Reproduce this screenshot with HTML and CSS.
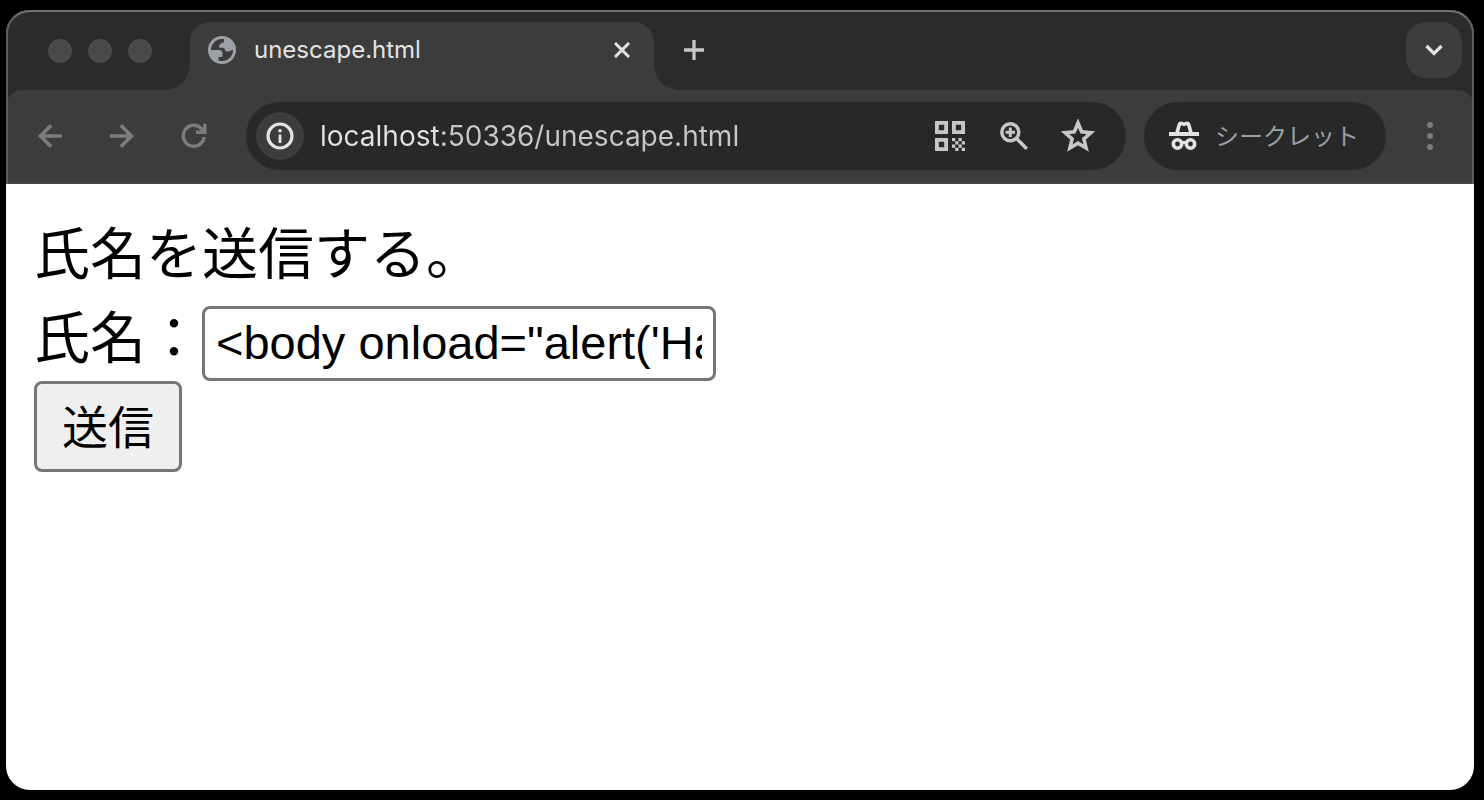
FILE: index.html
```html
<!DOCTYPE html>
<html lang="ja">
<head>
<meta charset="utf-8">
<title>unescape.html</title>
<link rel="stylesheet" href="styles.css">
</head>
<body>
<div class="window">
  <header class="chrome">
    <div class="tabstrip">
      <div class="lights"><span class="light"></span><span class="light"></span><span class="light"></span></div>
      <div class="tab">
        <svg class="favicon" viewBox="0 0 28 28" aria-hidden="true">
          <circle cx="14" cy="14" r="14" fill="#9aa0a6"/>
          <path fill="#3c3c3c" d="M3 14A11 11 0 0 1 14 3h2v2.500q0 1-1.500 1.200t-2 1.300q-1.300.5-1.300 1.700v2h4q1.500 0 1.500 1.500c0 1.500 1.500 2.300 3.500 2.300 2 0 2.500-1.500 4.800-1.500A11 11 0 0 1 14 25h-3.300v-4h2.300q1.500 0 1.500-1.500v-2C14.500 15 13 14 11 14z"/>
        </svg>
        <span class="tab-title">unescape.html</span>
        <button class="tab-close" aria-label="タブを閉じる">
          <svg width="16" height="16" viewBox="0 0 16 16"><path d="M1 1l14 14M15 1L1 15" stroke="#e3e3e3" stroke-width="3"/></svg>
        </button>
      </div>
      <button class="new-tab" aria-label="新しいタブ">
        <svg width="20" height="20" viewBox="0 0 20 20"><path d="M10 0v20M0 10h20" stroke="#c7c7c7" stroke-width="3.300"/></svg>
      </button>
      <button class="tab-search" aria-label="タブを検索">
        <svg width="18" height="12" viewBox="0 0 18 12"><path d="M1.500 2L9 9.500 16.500 2" fill="none" stroke="#e3e3e3" stroke-width="3.200"/></svg>
      </button>
    </div>
    <div class="toolbar">
      <button class="nav" aria-label="戻る">
        <svg width="24" height="24" viewBox="0 0 24 24"><path d="M24 12H2.500M13.200 1.300L2.500 12l10.700 10.700" fill="none" stroke="#7c7c7c" stroke-width="3.600"/></svg>
      </button>
      <button class="nav" aria-label="進む">
        <svg width="24" height="24" viewBox="0 0 24 24"><path d="M0 12h21.500M10.800 1.300L21.500 12 10.800 22.700" fill="none" stroke="#7c7c7c" stroke-width="3.600"/></svg>
      </button>
      <button class="nav" aria-label="再読み込み">
        <svg width="26" height="26" viewBox="0 0 26 26"><path d="M23.200 14A10.500 10.500 0 1 1 20.500 5.600L23 8.500M23.800.8v8.400H15" fill="none" stroke="#7c7c7c" stroke-width="3.400"/></svg>
      </button>
      <div class="address">
        <button class="site-info" aria-label="サイト情報">
          <svg width="28" height="28" viewBox="0 0 28 28"><circle cx="14" cy="14" r="12" fill="none" stroke="#e3e3e3" stroke-width="3.200"/><path d="M14 12.500V21" stroke="#e3e3e3" stroke-width="2.800"/><circle cx="14" cy="8.700" r="1.800" fill="#e3e3e3"/></svg>
        </button>
        <input class="url" type="text" aria-label="アドレス" value="localhost:50336/unescape.html">
        <button class="action" aria-label="QRコード">
          <svg width="30" height="30" viewBox="0 0 30 30"><g fill="none" stroke="#c7c7c7" stroke-width="3.800"><path d="M1.900 1.900h9.200v9.200H1.900zM18.900 1.900h9.200v9.200h-9.200zM1.900 18.900h9.200v9.200H1.900z"/></g><path fill="#c7c7c7" d="M17 17h3.250v3.250H17zM23.500 17h3.250v3.250H23.500zM20.250 20.250h3.250v3.250h-3.250zM26.750 20.250H30v3.250h-3.250zM17 23.500h3.250v3.250H17zM23.500 23.500h3.250v3.250H23.500zM20.250 26.750h3.250V30h-3.250zM26.750 26.750H30V30h-3.250z"/></svg>
        </button>
        <button class="action" aria-label="ズーム">
          <svg width="28" height="28" viewBox="0 0 28 28"><g fill="none" stroke="#c7c7c7" stroke-width="3.500"><circle cx="10.300" cy="10.300" r="8.500"/><path d="M16.300 16.300L26.800 26.800"/><path d="M10.300 5.500v9.600M5.500 10.300h9.600" stroke-width="3"/></g></svg>
        </button>
        <button class="action" aria-label="ブックマーク">
          <svg width="34" height="34" viewBox="0 0 34 34"><path d="M17 4l3.700 8.900 9.300.8-7.100 6.200 2.200 9.200-8.100-4.900-8.100 4.900 2.200-9.200L4 13.700l9.300-.8z" fill="none" stroke="#c7c7c7" stroke-width="3.600"/></svg>
        </button>
      </div>
      <div class="incognito">
        <svg width="30" height="30" viewBox="0 0 30 30" aria-hidden="true"><g fill="none" stroke="#e3e3e3"><path d="M0 13h30" stroke-width="3.800"/><path d="M7.800 12.500L10.200 4Q10.700 1.800 12.500 2.400L15 3.300l2.500-.9q1.800-.6 2.300 1.600l2.400 8.500" stroke-width="3.600"/><circle cx="8.500" cy="23" r="4.200" stroke-width="3.600"/><circle cx="21.500" cy="23" r="4.200" stroke-width="3.600"/><path d="M12.500 22q2.500-1.500 5 0" stroke-width="3"/></g></svg>
        <span class="incognito-label">シークレット</span>
      </div>
      <button class="menu" aria-label="メニュー">
        <svg width="6" height="28" viewBox="0 0 6 28" fill="#7c7c7c"><circle cx="3" cy="3" r="3"/><circle cx="3" cy="14" r="3"/><circle cx="3" cy="25" r="3"/></svg>
      </button>
    </div>
  </header>
  <main class="page">
    <p class="lead">氏名を送信する。</p>
    <form class="form">
      <div class="row">
        <label class="label" for="name">氏名：</label>
        <input class="field" id="name" type="text" value="&lt;body onload=&quot;alert('Hacked')&quot;&gt;">
      </div>
      <button class="submit" type="button">送信</button>
    </form>
  </main>
</div>
</body>
</html>
```
FILE: styles.css
```css
* { box-sizing: border-box; }
body {
  margin: 0;
  min-height: 100vh;
  padding: 10px 10px 10px 6px;
  display: flex;
  background: #000;
  font-family: Inter, "Noto Sans CJK JP", sans-serif;
}
button {
  display: flex;
  align-items: center;
  justify-content: center;
  flex: none;
  margin: 0;
  padding: 0;
  border: 0;
  background: none;
}
svg { display: block; flex: none; }
.window {
  flex: 1;
  min-width: 0;
  display: flex;
  flex-direction: column;
  border-radius: 24px;
  background: #fff;
  overflow: hidden;
}
.chrome { position: relative; background: #2b2b2b; }
.chrome::after {
  content: "";
  position: absolute;
  inset: 0;
  border: 2px solid #5e5e5e;
  border-top-color: #6e6e6e;
  border-bottom: 0;
  border-radius: 24px 24px 0 0;
  pointer-events: none;
}
.tabstrip {
  display: flex;
  align-items: flex-start;
  height: 80px;
  padding: 12px 12px 0 42px;
}
.lights { display: flex; gap: 16px; padding-top: 17px; margin-right: 38px; }
.light { width: 24px; height: 24px; border-radius: 50%; background: #4a4a4a; }
.tab {
  position: relative;
  display: flex;
  align-items: center;
  width: 464px;
  height: 68px;
  padding: 0 20px 12px 18px;
  border-radius: 20px 20px 0 0;
  background: #3c3c3c;
}
.tab::before,
.tab::after {
  content: "";
  position: absolute;
  bottom: 0;
  width: 24px;
  height: 24px;
}
.tab::before { right: 100%; background: radial-gradient(circle at 0 0, transparent 23px, #3c3c3c 24px); }
.tab::after { left: 100%; background: radial-gradient(circle at 100% 0, transparent 23px, #3c3c3c 24px); }
.favicon { width: 28px; height: 28px; }
.tab-title {
  flex: 1;
  margin-left: 18px;
  color: #e3e3e3;
  font-size: 24px;
  line-height: 32px;
}
.tab-close { width: 24px; height: 24px; }
.new-tab { width: 40px; height: 56px; margin-left: 20px; }
.tab-search {
  width: 56px;
  height: 56px;
  margin-left: auto;
  border-radius: 20px;
  background: #3c3c3c;
}
.toolbar {
  display: flex;
  align-items: center;
  height: 94px;
  padding: 0 0 0 8px;
  border-bottom: 2px solid #484848;
  border-radius: 16px 16px 0 0;
  background: #3c3c3c;
}
.nav { width: 72px; height: 68px; }
.address {
  flex: 1;
  min-width: 0;
  display: flex;
  align-items: center;
  height: 68px;
  margin: 0 18px 0 16px;
  padding: 0 16px 0 10px;
  border-radius: 34px;
  background: #282828;
}
.site-info { width: 48px; height: 48px; border-radius: 50%; background: #3c3c3c; }
.url {
  flex: 1;
  min-width: 0;
  height: 40px;
  margin-left: 16px;
  padding: 0;
  border: 0;
  outline: 0;
  background: linear-gradient(90deg, #e3e3e3 120px, #c7c7c7 120px);
  -webkit-background-clip: text;
  background-clip: text;
  color: #c7c7c7;
  -webkit-text-fill-color: transparent;
  font-family: Inter, sans-serif;
  font-size: 28px;
}
.action { width: 64px; height: 64px; }
.incognito {
  display: flex;
  align-items: center;
  gap: 16px;
  height: 68px;
  padding: 0 27px 0 25px;
  border-radius: 34px;
  background: #282828;
}
.incognito-label {
  padding-bottom: 2px;
  color: #9aa0a6;
  font-family: "Noto Sans CJK JP", sans-serif;
  font-size: 24px;
  line-height: 32px;
}
.menu { width: 88px; height: 68px; }
.page {
  flex: 1;
  padding: 24px 28px 28px;
  color: #000;
  font-family: "Noto Sans CJK JP", sans-serif;
  font-size: 56px;
  line-height: 84px;
}
.lead { margin: 0; }
.row { display: flex; }
.label { flex: none; }
.field {
  width: 514px;
  height: 75px;
  margin-top: 14px;
  padding: 0 11px 2px;
  border: 3px solid #767676;
  border-radius: 8px;
  background: #fff;
  color: #000;
  font-family: "Liberation Sans", Arial, sans-serif;
  font-size: 47px;
}
.submit {
  height: 91px;
  padding: 0 25px 6px;
  border: 3px solid #767676;
  border-radius: 8px;
  background: #efefef;
  color: #000;
  font-family: "Noto Sans CJK JP", sans-serif;
  font-size: 46px;
}
```
